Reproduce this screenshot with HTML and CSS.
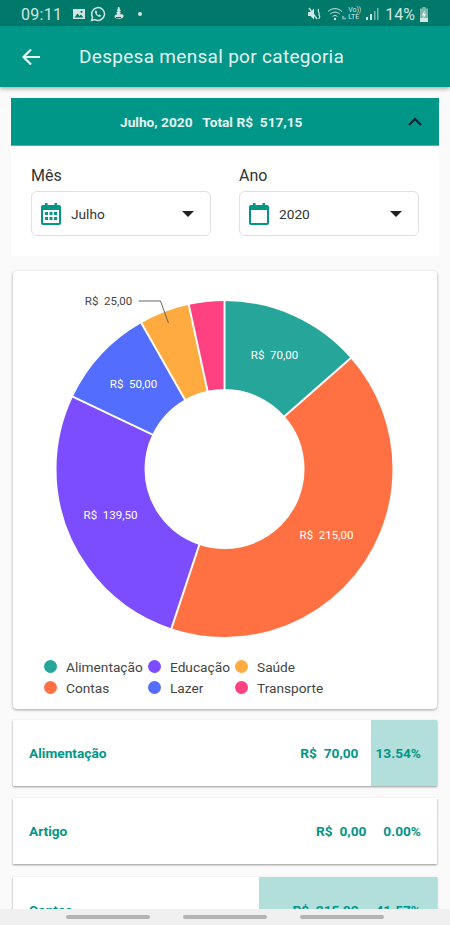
FILE: index.html
```html
<!DOCTYPE html>
<html lang="pt-br">

<head>
  <meta charset="UTF-8">
  <meta name="viewport" content="width=device-width, initial-scale=1.0">
  <title>Despesa mensal por categoria</title>
  <link rel="stylesheet" href="styles.css">
</head>

<body>
  <div class="status-bar">
    <div class="status-side">
      <span class="status-time">09:11</span>
      <svg class="st-icon" width="14" height="14" viewBox="0 0 14 14">
        <path fill="#cfe6e2" d="M1 2h12v10H1z" />
        <path fill="#00796b" d="M2.5 10.5l3-4 2 2.5 1.5-1.5 2.5 3z" />
        <circle fill="#00796b" cx="9.5" cy="4.8" r="1.1" />
      </svg>
      <svg class="st-icon st-chat" width="16" height="16" viewBox="0 0 16 16">
        <path fill="none" stroke="#cfe6e2" stroke-width="1.5" d="M1.6 14.4l.9-3.3A6.4 6.4 0 1 1 5 13.6z" />
        <path fill="#cfe6e2" d="M5.6 4.6c-.9.8-.9 2 0 3.3 1 1.5 2.2 2.5 3.6 2.9 1 .2 1.900-.4 2-1.400l-1.700-.9-.8.8c-.9-.4-1.600-1.100-2.100-2l.7-.8-.8-1.800z" />
      </svg>
      <svg class="st-icon" width="12" height="14" viewBox="0 0 12 14">
        <path fill="#cfe6e2" d="M5.500 0c1.300 0 1.800 1.200 1.200 2.200L8 3.400 6.500 4.700l1.700 1-1.500 1.300 3.300.6c1 .8.8 2.600-.4 3.300-1.700 1-5.600 1-7.300.1-1.100-.6-1-1.900-.2-2.700L4.400 7 3.200 5.800l1.600-1.500-1-1.200 1.100-1C4.600.9 4.700 0 5.500 0z" />
        <path stroke="#00796b" d="M3 10.500h5" />
      </svg>
      <span class="status-dot"></span>
    </div>
    <div class="status-side">
      <svg class="st-icon" width="15" height="14" viewBox="0 0 15 14">
        <path fill="#cfe6e2" d="M0 5h2.500L6 1.500v11L2.500 9H0z" />
        <path stroke="#cfe6e2" stroke-width="1.300" d="M1 1l8 11" />
        <path fill="none" stroke="#cfe6e2" stroke-width="1.200" d="M10 2c1.500 1.300-.6 2.200.8 3.400 1.400 1.200-.8 2.200.6 3.400 1 .9 0 2-.8 3" />
      </svg>
      <svg class="st-icon st-wifi" width="19" height="14" viewBox="0 0 19 14">
        <g fill="none" stroke="#cfe6e2" stroke-width="1">
          <path d="M1 4.500c4-3.800 10-3.800 14 0" />
          <path d="M3.300 7c2.800-2.500 6.600-2.500 9.400 0" />
          <path d="M5.600 9.500c1.500-1.300 3.300-1.300 4.800 0" />
        </g>
        <circle fill="#cfe6e2" cx="8" cy="12" r="1.200" />
        <path stroke="#cfe6e2" d="M16 9v3.500M18 10.500v2" />
      </svg>
      <span class="status-volte">Vo)) <br>LTE</span>
      <svg class="st-icon" width="14" height="13" viewBox="0 0 14 13">
        <path fill="#cfe6e2" d="M1 9h2v3H1zM5 6h2v6H5z" />
        <path fill="#7fb5ad" d="M9 3h1.500v9H9zM12 0h1.500v12H12z" />
      </svg>
      <span class="status-batt">14%</span>
      <svg class="st-batt" width="10" height="15" viewBox="0 0 10 15">
        <path fill="#7fb5ad" d="M3.500 0h3v1.500H9V15H1V1.500h2.500z" />
        <path fill="#cfe6e2" d="M1 11h8v4H1z" />
        <path fill="#fff" d="M5.800 3L3 8.500h1.800L4.200 12 7 6.800H5.200z" />
      </svg>
    </div>
  </div>

  <header class="app-bar">
    <svg class="back" width="20" height="18" viewBox="0 0 20 18">
      <path fill="none" stroke="#e6f4f2" stroke-width="2.200" d="M19 9H2.500M10 1.500L2.500 9l7.500 7.500" />
    </svg>
    <h1>Despesa mensal por categoria</h1>
  </header>

  <main class="content">
    <section class="filter">
      <div class="filter-head">
        <span class="filter-title">Julho, 2020 &nbsp; Total R$&nbsp; 517,15</span>
        <svg width="14" height="9" viewBox="0 0 14 9">
          <path fill="none" stroke="#123" stroke-width="2.200" d="M1 8l6-6 6 6" />
        </svg>
      </div>
      <div class="filter-body">
        <div class="field">
          <label>Mês</label>
          <div class="select">
            <svg width="20" height="22" viewBox="0 0 20 22">
              <path fill="#009688" d="M4 0h2.500v2h7V0H16v2h2a2 2 0 0 1 2 2v16a2 2 0 0 1-2 2H2a2 2 0 0 1-2-2V4a2 2 0 0 1 2-2h2zM2 7v13h16V7z" />
              <path fill="#009688" d="M4 9h3v3H4zM8.500 9h3v3h-3zM13 9h3v3h-3zM4 14h3v3H4zM8.500 14h3v3h-3zM13 14h3v3h-3z" />
            </svg>
            <span class="select-value">Julho</span>
            <span class="caret"></span>
          </div>
        </div>
        <div class="field">
          <label>Ano</label>
          <div class="select">
            <svg width="20" height="22" viewBox="0 0 20 22">
              <path fill="#009688" d="M4 0h2.500v2h7V0H16v2h2a2 2 0 0 1 2 2v16a2 2 0 0 1-2 2H2a2 2 0 0 1-2-2V4a2 2 0 0 1 2-2h2zM2 7v13h16V7z" />
            </svg>
            <span class="select-value">2020</span>
            <span class="caret"></span>
          </div>
        </div>
      </div>
    </section>

    <section class="chart-card">
      <svg class="donut" width="424" height="376" viewBox="-211.500 -198 424 376">
        <g fill="none" stroke-width="88" transform="rotate(-90)">
          <circle r="124" pathLength="360" stroke="#26a69a" stroke-dasharray="48.73 360" />
          <circle r="124" pathLength="360" stroke="#ff7043" stroke-dasharray="149.67 360" stroke-dashoffset="-48.73" />
          <circle r="124" pathLength="360" stroke="#7c4dff" stroke-dasharray="97.11 360" stroke-dashoffset="-198.40" />
          <circle r="124" pathLength="360" stroke="#536dfe" stroke-dasharray="34.81 360" stroke-dashoffset="-295.51" />
          <circle r="124" pathLength="360" stroke="#ffab40" stroke-dasharray="17.40 360" stroke-dashoffset="-330.32" />
          <circle r="124" pathLength="360" stroke="#ff4081" stroke-dasharray="12.28 360" stroke-dashoffset="-347.72" />
        </g>
        <g stroke="#fff" stroke-width="2">
          <line y1="-78" y2="-170" />
          <line y1="-78" y2="-170" transform="rotate(48.73)" />
          <line y1="-78" y2="-170" transform="rotate(198.40)" />
          <line y1="-78" y2="-170" transform="rotate(295.51)" />
          <line y1="-78" y2="-170" transform="rotate(330.32)" />
          <line y1="-78" y2="-170" transform="rotate(347.72)" />
        </g>
        <g class="slice-label">
          <text x="50" y="-110">R$&#160; 70,00</text>
          <text x="102" y="70">R$&#160; 215,00</text>
          <text x="-114" y="50">R$&#160; 139,50</text>
          <text x="-91" y="-81">R$&#160; 50,00</text>
        </g>
        <text class="out-label" x="-116" y="-164">R$&#160; 25,00</text>
        <path fill="none" stroke="#666" d="M-86 -168H-64L-56 -146" />
      </svg>
      <div class="legend">
        <div class="legend-item"><span class="dot dot-ali"></span>Alimentação</div>
        <div class="legend-item"><span class="dot dot-edu"></span>Educação</div>
        <div class="legend-item"><span class="dot dot-sau"></span>Saúde</div>
        <div class="legend-item"><span class="dot dot-con"></span>Contas</div>
        <div class="legend-item"><span class="dot dot-laz"></span>Lazer</div>
        <div class="legend-item"><span class="dot dot-tra"></span>Transporte</div>
      </div>
    </section>

    <section class="row">
      <div class="row-bar" style="width: 66px"></div>
      <span class="row-name">Alimentação</span>
      <span>R$&nbsp; 70,00</span>
      <span>13.54%</span>
    </section>
    <section class="row">
      <span class="row-name">Artigo</span>
      <span>R$&nbsp; 0,00</span>
      <span>0.00%</span>
    </section>
    <section class="row">
      <div class="row-bar" style="width: 178px"></div>
      <span class="row-name">Contas</span>
      <span>R$&nbsp; 215,00</span>
      <span>41.57%</span>
    </section>
  </main>

  <nav class="nav-bar">
    <span class="pill"></span>
    <span class="pill"></span>
    <span class="pill"></span>
  </nav>
</body>

</html>
```

FILE: styles.css
```css
* {
  padding: 0;
  margin: 0;
  box-sizing: border-box;
}

body {
  font-family: Roboto, "Liberation Sans", sans-serif;
  width: 450px;
  height: 925px;
  overflow: hidden;
  display: flex;
  flex-direction: column;
  background-color: #fafafa;
  color: #333;
}

.status-bar {
  height: 26px;
  flex: none;
  display: flex;
  justify-content: space-between;
  align-items: center;
  padding: 2px 21px 0 21px;
  background-color: #00796b;
  color: #cfe6e2;
}

.status-side {
  display: flex;
  align-items: center;
}

.status-time {
  font-size: 16px;
  letter-spacing: .3px;
  margin-right: 10px;
}

.st-icon {
  margin-right: 4px;
  flex: none;
}

.st-chat {
  margin-right: 7px;
}

.st-wifi {
  margin-right: 2px;
}

.st-batt {
  flex: none;
}

.status-dot {
  width: 4px;
  height: 4px;
  margin-left: 9px;
  border-radius: 50%;
  background-color: #cfe6e2;
}

.status-volte {
  font-size: 7px;
  line-height: 7px;
  margin-right: 4px;
}

.status-batt {
  font-size: 16px;
  margin: 0 4px 0 2px;
}

.app-bar {
  height: 61px;
  flex: none;
  display: flex;
  align-items: center;
  padding-left: 21px;
  background-color: #009688;
  box-shadow: 0 2px 4px rgba(0, 0, 0, .3);
  position: relative;
}

.app-bar h1 {
  margin-left: 38px;
  font-size: 19px;
  font-weight: 400;
  letter-spacing: .3px;
  color: #e6f4f2;
}

.content {
  flex: 1;
  min-height: 0;
  overflow: hidden;
  padding-top: 11px;
}

.filter {
  margin: 0 11px;
  background-color: white;
}

.filter-head {
  height: 48px;
  display: flex;
  justify-content: space-between;
  align-items: center;
  padding: 0 17px 0 109px;
  background-color: #009688;
  border-bottom: 1px solid #4db6ac;
}

.filter-title {
  font-size: 13.700px;
  font-weight: 700;
  color: #e6f4f2;
}

.filter-body {
  display: grid;
  grid-template-columns: 180px 180px;
  gap: 28px;
  padding: 20px;
}

.field label {
  display: block;
  font-size: 16px;
  line-height: 19px;
  margin-bottom: 6px;
}

.select {
  height: 45px;
  display: flex;
  align-items: center;
  padding: 0 16px 0 9px;
  border: 1px solid #e0e0e0;
  border-radius: 6px;
}

.select-value {
  flex: 1;
  margin-left: 10px;
  font-size: 13.700px;
}

.caret {
  width: 0;
  height: 0;
  border-left: 6px solid transparent;
  border-right: 6px solid transparent;
  border-top: 6px solid #222;
}

.chart-card {
  height: 438px;
  margin: 15px 13px 11px;
  background-color: white;
  border-radius: 4px;
  box-shadow: 0 1px 3px rgba(0, 0, 0, .35);
}

.donut {
  display: block;
}

.slice-label text {
  font-size: 11.500px;
  fill: white;
  text-anchor: middle;
}

.out-label {
  font-size: 11.500px;
  fill: #444;
  text-anchor: middle;
}

.legend {
  display: grid;
  grid-template-columns: 104px 87px auto;
  row-gap: 4px;
  padding: 11px 0 0 31px;
}

.legend-item {
  display: flex;
  align-items: center;
  height: 17px;
  font-size: 13.700px;
  color: #444;
}

.dot {
  width: 13px;
  height: 13px;
  margin-right: 9px;
  border-radius: 50%;
}

.dot-ali { background-color: #26a69a; }
.dot-edu { background-color: #7c4dff; }
.dot-sau { background-color: #ffab40; }
.dot-con { background-color: #ff7043; }
.dot-laz { background-color: #536dfe; }
.dot-tra { background-color: #ff4081; }

.row {
  height: 66px;
  margin: 0 13px 12.400px;
  display: flex;
  align-items: center;
  gap: 17px;
  padding: 0 16px;
  position: relative;
  background-color: white;
  font-size: 13.700px;
  font-weight: 700;
  color: #009688;
  box-shadow: 0 1px 2px rgba(0, 0, 0, .4);
}

.row span {
  position: relative;
}

.row-name {
  flex: 1;
}

.row-bar {
  position: absolute;
  top: 0;
  right: 0;
  bottom: 0;
  background-color: #b2dfdb;
}

.nav-bar {
  height: 16px;
  flex: none;
  display: flex;
  justify-content: center;
  align-items: center;
  gap: 33px;
  background-color: #f0f0f0;
  position: relative;
}

.pill {
  width: 84px;
  height: 4px;
  border-radius: 2px;
  background-color: #b4b4b4;
}
```
